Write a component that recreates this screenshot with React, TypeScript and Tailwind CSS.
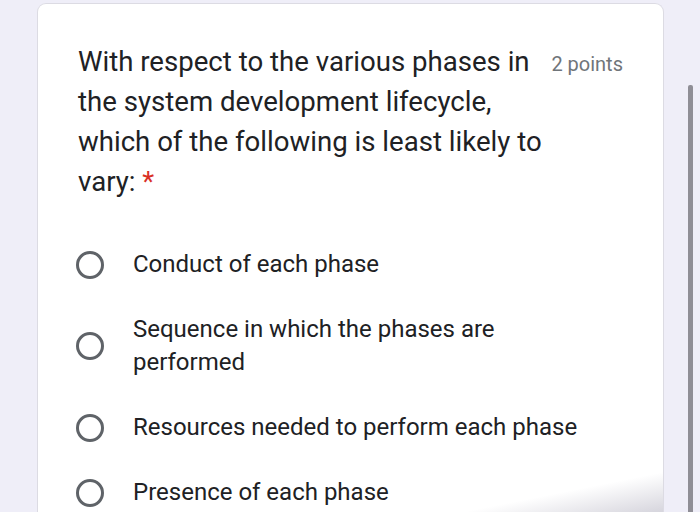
const options: string[][] = [
  ['Conduct of each phase'],
  ['Sequence in which the phases are', 'performed'],
  ['Resources needed to perform each phase'],
  ['Presence of each phase'],
];

const Radio = () => (
  <div className="h-[28px] w-[28px] shrink-0 rounded-full border-[3px] border-[#5f6368]" />
);

export default function App() {
  return (
    <div
      className="flex h-[512px] w-[700px] overflow-hidden bg-[#efeef8]"
      style={{ fontFamily: 'Roboto, "Liberation Sans", sans-serif' }}
    >
      <div className="relative ml-[37px] mt-[3px] w-[627px] shrink-0 rounded-t-[9px] border border-b-0 border-[#dcdbe3] bg-white pl-[40px] pr-[40px] pt-[38px]">
        <div className="flex items-start justify-between">
          <h1 className="text-[27.6px] leading-[40px] text-[#202124]">
            With respect to the various phases in
            <br />
            the system development lifecycle,
            <br />
            which of the following is least likely to
            <br />
            vary: <span className="text-[#d93025]">*</span>
          </h1>
          <span className="pt-[6px] text-[20px] leading-[32px] text-[#70757a]">2 points</span>
        </div>
        <div className="mt-[46px] flex flex-col gap-[32px]">
          {options.map((o) => (
            <label key={o[0]} className="-ml-[2px] flex items-center gap-[29px]">
              <Radio />
              <span className="text-[24px] leading-[33px] text-[#202124]">
                {o.map((l, i) => (
                  <span key={i} className="block">
                    {l}
                  </span>
                ))}
              </span>
            </label>
          ))}
        </div>
        <div className="pointer-events-none absolute bottom-0 right-0 h-[40px] w-[200px] bg-gradient-to-tl from-[#d6d5dd] via-transparent to-transparent" />
      </div>
      <div className="ml-[24px] mt-[85px] h-[427px] w-[5px] rounded-t-[2px] bg-[#8f8e96]" />
    </div>
  );
}
